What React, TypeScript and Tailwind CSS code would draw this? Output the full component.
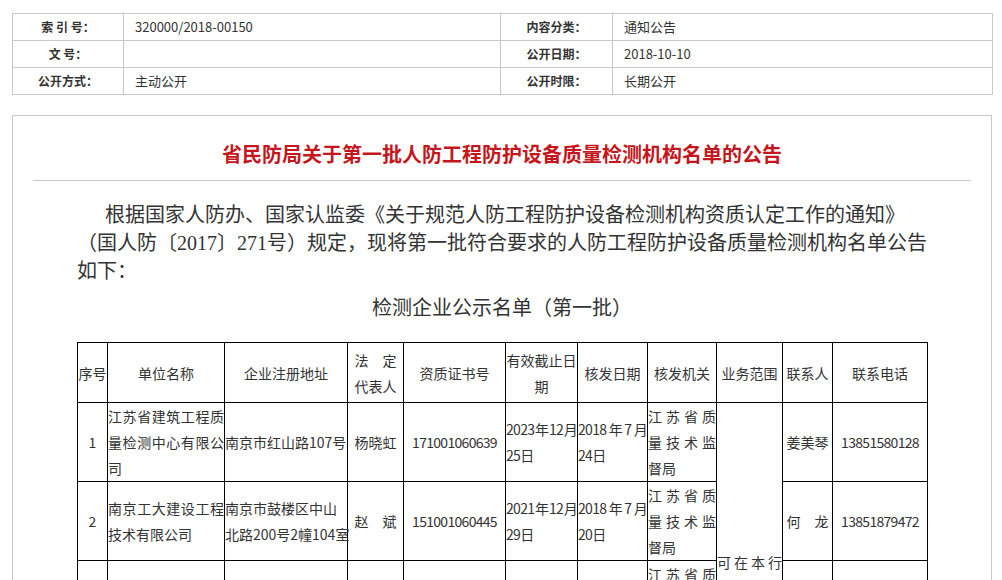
import React from "react";

const cjk = "font-['Noto_Sans_CJK_SC','Noto_Sans',sans-serif]";

const infoRows = [
  ["索 引 号：", "320000/2018-00150", "内容分类：", "通知公告"],
  ["文 号：", "", "公开日期：", "2018-10-10"],
  ["公开方式：", "主动公开", "公开时限：", "长期公开"],
];

type Row = {
  no: string;
  name: string;
  addr: React.ReactNode;
  rep: string;
  cert: string;
  expire: string;
  issued: string;
  org: string;
  person: string;
  phone: string;
};

const rows: Row[] = [
  {
    no: "1",
    name: "江苏省建筑工程质量检测中心有限公司",
    addr: "南京市红山路107号",
    rep: "杨晓虹",
    cert: "171001060639",
    expire: "2023年12月25日",
    issued: "2018年7月24日",
    org: "江苏省质量技术监督局",
    person: "姜美琴",
    phone: "13851580128",
  },
  {
    no: "2",
    name: "南京工大建设工程技术有限公司",
    addr: (
      <>
        南京市鼓楼区中山
        <br />
        <span className="whitespace-nowrap">北路200号2幢104室</span>
      </>
    ),
    rep: "赵　斌",
    cert: "151001060445",
    expire: "2021年12月29日",
    issued: "2018年7月20日",
    org: "江苏省质量技术监督局",
    person: "何　龙",
    phone: "13851879472",
  },
  {
    no: "3",
    name: "江苏省防护工程质量检测有限公司",
    addr: "南京市中山东路",
    rep: "王　军",
    cert: "171001060712",
    expire: "2023年12月25日",
    issued: "2018年7月24日",
    org: "江苏省质量技术监督局",
    person: "李　明",
    phone: "13905182317",
  },
  {
    no: "4",
    name: "苏州市建设工程质量检测中心有限公司",
    addr: "苏州市干将西路",
    rep: "陈　刚",
    cert: "161001060218",
    expire: "2022年6月18日",
    issued: "2018年7月24日",
    org: "江苏省质量技术监督局",
    person: "周　洁",
    phone: "13962135508",
  },
  {
    no: "5",
    name: "无锡市建筑工程质量检测中心",
    addr: "无锡市梁溪路",
    rep: "张　华",
    cert: "171001060533",
    expire: "2023年9月10日",
    issued: "2018年7月24日",
    org: "江苏省质量技术监督局",
    person: "吴　静",
    phone: "13861711296",
  },
  {
    no: "6",
    name: "常州市建筑科学研究院有限公司",
    addr: "常州市晋陵中路",
    rep: "刘　强",
    cert: "171001060581",
    expire: "2023年10月8日",
    issued: "2018年7月24日",
    org: "江苏省质量技术监督局",
    person: "孙　丽",
    phone: "13915086423",
  },
];

const head = [
  "序号",
  "单位名称",
  "企业注册地址",
  "",
  "资质证书号",
  "有效截止日期",
  "核发日期",
  "核发机关",
  "业务范围",
  "联系人",
  "联系电话",
];

const cols = [30, 117, 123, 56, 102, 72, 70, 69, 66, 50, 95];

const td = "border border-black p-0 align-middle";
const num = "tracking-[-0.7px]";

export default function App() {
  return (
    <div className={`min-h-[580px] bg-white pb-10 text-[#333] ${cjk}`}>
      <table className="ml-[12px] mt-[13px] w-[980px] table-fixed border-collapse text-[12px]">
        <colgroup>
          <col className="w-[111px]" />
          <col className="w-[377px]" />
          <col className="w-[112px]" />
          <col className="w-[380px]" />
        </colgroup>
        <tbody>
          {infoRows.map((r, i) => (
            <tr key={i} className="h-[27px]">
              <td className="border border-[#c8c8c8] text-center font-bold">{r[0]}</td>
              <td className="border border-[#c8c8c8] pl-[11px] text-[13px]">{r[1]}</td>
              <td className="border border-[#c8c8c8] text-center font-bold">{r[2]}</td>
              <td className="border border-[#c8c8c8] pl-[11px] text-[13px]">{r[3]}</td>
            </tr>
          ))}
        </tbody>
      </table>

      <div className="ml-[12px] mt-[20px] w-[980px] border border-[#c8c8c8] px-[20px] pb-10">
        <h1 className="pt-[23px] pb-[11px] text-center text-[20px] font-bold leading-[30px] text-[#c4161c]">
          省民防局关于第一批人防工程防护设备质量检测机构名单的公告
        </h1>
        <div className="h-px bg-[#c8c8c8]" />

        <div className="mx-auto mt-[20px] w-[850px]">
          <p className="indent-[28px] text-[20px] leading-[28px] text-[#333] font-['Liberation_Serif','Noto_Sans_CJK_SC',serif]">
            根据国家人防办、国家认监委《关于规范人防工程防护设备检测机构资质认定工作的通知》
            <br />
            （国人防〔2017〕271号）规定，现将第一批符合要求的人防工程防护设备质量检测机构名单公告
            <br />
            如下：
          </p>

          <p className="mt-[8px] text-center text-[20px] leading-[28px]">检测企业公示名单（第一批）</p>

          <table className="mt-[21px] w-[850px] table-fixed border-collapse border border-black text-[14px] leading-[26px] text-[#333]">
            <colgroup>
              {cols.map((w, i) => (
                <col key={i} style={{ width: w }} />
              ))}
            </colgroup>
            <thead>
              <tr className="h-[60px]">
                {head.map((h, i) => (
                  <td key={i} className={`${td} text-center font-normal`}>
                    {i === 3 ? (
                      <>
                        法　定
                        <br />
                        代表人
                      </>
                    ) : (
                      h
                    )}
                  </td>
                ))}
              </tr>
            </thead>
            <tbody>
              {rows.map((r, i) => (
                <tr key={i} className="h-[79px]">
                  <td className={`${td} text-center`}>{r.no}</td>
                  <td className={`${td} text-justify`}>{r.name}</td>
                  <td className={`${td} text-justify`}>{r.addr}</td>
                  <td className={`${td} text-center`}>{r.rep}</td>
                  <td className={`${td} text-center ${num}`}>{r.cert}</td>
                  <td className={`${td} text-justify ${num}`}>{r.expire}</td>
                  <td className={`${td} text-justify ${num}`}>{r.issued}</td>
                  <td className={`${td} text-justify`}>{r.org}</td>
                  {i === 0 && (
                    <td rowSpan={rows.length} className={`${td} text-justify`}>
                      可在本行政区域内从事人民防空工程防护设备质量检测工作
                    </td>
                  )}
                  <td className={`${td} text-center`}>{r.person}</td>
                  <td className={`${td} text-center ${num}`}>{r.phone}</td>
                </tr>
              ))}
            </tbody>
          </table>
        </div>
      </div>
    </div>
  );
}
